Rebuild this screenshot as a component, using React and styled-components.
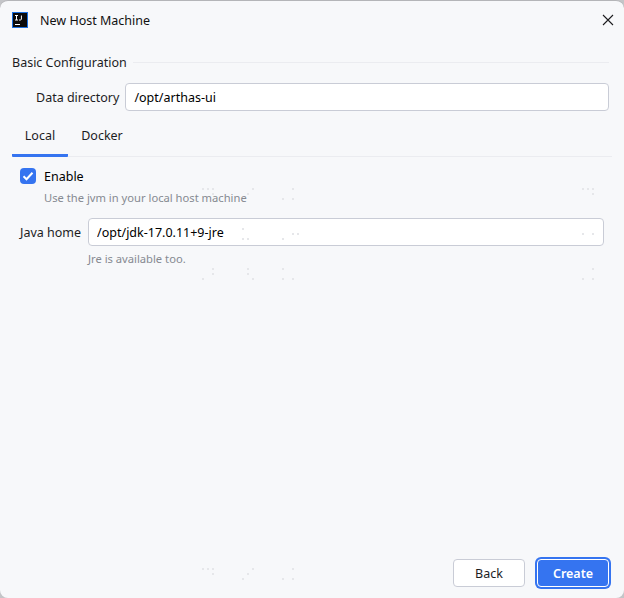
import styled, { createGlobalStyle } from "styled-components";

const GlobalStyle = createGlobalStyle`
  html, body {
    margin: 0;
    padding: 0;
    background: #c4c5c8;
  }
  * {
    box-sizing: border-box;
  }
`;

const Dialog = styled.div`
  position: relative;
  width: 624px;
  height: 598px;
  display: flex;
  flex-direction: column;
  background: #f7f8fa;
  border-top: 1px solid #b4b5b8;
  border-radius: 8px;
  font-family: "Noto Sans", "Open Sans", sans-serif;
  font-size: 12.5px;
  color: #000;
  overflow: hidden;
`;

const TitleBar = styled.div`
  height: 38px;
  display: flex;
  align-items: center;
  justify-content: space-between;
  padding: 0 10px 0 12px;
  flex: none;
`;

const TitleGroup = styled.div`
  display: flex;
  align-items: center;
  gap: 12px;
`;

const Logo = styled.svg`
  width: 16px;
  height: 16px;
  display: block;
`;

const Title = styled.span`
  color: #111;
`;

const CloseIcon = styled.svg`
  width: 12px;
  height: 12px;
  display: block;
`;

const Body = styled.div`
  flex: 1;
  display: flex;
  flex-direction: column;
  padding: 13px 12px 0;
`;

const SectionHeader = styled.div`
  display: flex;
  align-items: center;
  gap: 6px;
  height: 20px;
  margin-right: 3px;
`;

const SectionTitle = styled.span`
  color: #1d1d1f;
  white-space: nowrap;
`;

const Rule = styled.div`
  flex: 1;
  height: 1px;
  background: #ebecf0;
`;

const DirRow = styled.div`
  display: flex;
  align-items: center;
  gap: 6px;
  margin: 11px 3px 0 24px;
`;

const FieldLabel = styled.label`
  color: #1d1d1f;
  white-space: nowrap;
`;

const Input = styled.input`
  flex: 1;
  min-width: 0;
  height: 28px;
  padding: 0 8px;
  border: 1px solid #c9ccd6;
  border-radius: 4px;
  background: #fff;
  font: inherit;
  color: #000;
  outline: none;
`;

const Tabs = styled.div`
  display: flex;
  height: 42px;
  margin-top: 4px;
  border-bottom: 1px solid #ebecf0;
`;

const Tab = styled.div`
  width: ${(p) => p.$width}px;
  display: flex;
  align-items: center;
  justify-content: center;
  padding-top: 2px;
  color: #1d1d1f;
  margin-bottom: -1px;
  border-bottom: 3px solid ${(p) => (p.$active ? "#3574f0" : "transparent")};
  border-radius: 1px;
`;

const Panel = styled.div`
  display: flex;
  flex-direction: column;
  padding: 8px 8px 0;
`;

const CheckRow = styled.div`
  display: flex;
  align-items: center;
  gap: 8px;
  height: 22px;
`;

const Checkbox = styled.span`
  width: 16px;
  height: 16px;
  display: flex;
  align-items: center;
  justify-content: center;
  border-radius: 4px;
  background: #3574f0;
`;

const Hint = styled.div`
  font-size: 11.2px;
  color: #868a91;
  margin-top: ${(p) => p.$top}px;
  margin-left: ${(p) => p.$indent}px;
  line-height: 16px;
`;

const HomeRow = styled.div`
  display: flex;
  align-items: center;
  gap: 7px;
  margin-top: 12px;
`;

const Footer = styled.div`
  display: flex;
  justify-content: flex-end;
  gap: 12px;
  padding: 0 15px 11px 0;
`;

const Button = styled.button`
  width: 72px;
  height: 28px;
  padding: 0;
  border: 1px solid ${(p) => (p.$primary ? "#fff" : "#c9ccd6")};
  border-radius: 4px;
  background: ${(p) => (p.$primary ? "#3574f0" : "#fff")};
  box-shadow: ${(p) => (p.$primary ? "0 0 0 2px #3574f0" : "none")};
  color: ${(p) => (p.$primary ? "#fff" : "#1d1d1f")};
  font: inherit;
  font-weight: ${(p) => (p.$primary ? 600 : 400)};
`;

const Watermark = styled.svg`
  position: absolute;
  left: 0;
  top: -1px;
  pointer-events: none;
`;

const dots = [
  [202, 188], [207, 188], [212, 188], [252, 188], [292, 188], [582, 188], [587, 188], [592, 188],
  [212, 193], [247, 193], [282, 198], [292, 198], [592, 193],
  [242, 228], [242, 238], [247, 238], [282, 238], [292, 233], [297, 233], [582, 233], [592, 233],
  [212, 268], [247, 268], [282, 268], [592, 268],
  [202, 278], [212, 273], [247, 273], [252, 278], [282, 278], [292, 278], [582, 278], [592, 278],
  [202, 568], [207, 568], [212, 568], [252, 568], [292, 568],
  [212, 573], [247, 573], [242, 578], [282, 578], [292, 578],
];

const App = () => {
  return (
    <Dialog>
      <GlobalStyle />
      <TitleBar>
        <TitleGroup>
          <Logo viewBox="0 0 16 16">
            <rect width="16" height="16" fill="#0a0a0a" />
            <rect x="0.5" y="0.5" width="15" height="15" fill="none" stroke="#1a6fe0" />
            <path d="M3 3.5h3M4.5 3.5v4.5M3 8h3M7 8h1.4c.6 0 1-.4 1-1V3.5" stroke="#fff" strokeWidth="1" fill="none" />
            <path d="M3 12.5h5" stroke="#fff" strokeWidth="1" />
          </Logo>
          <Title>New Host Machine</Title>
        </TitleGroup>
        <CloseIcon viewBox="0 0 12 12">
          <path d="M1 1l10 10M11 1L1 11" stroke="#1d1d1f" strokeWidth="1.1" />
        </CloseIcon>
      </TitleBar>
      <Body>
        <SectionHeader>
          <SectionTitle>Basic Configuration</SectionTitle>
          <Rule />
        </SectionHeader>
        <DirRow>
          <FieldLabel>Data directory</FieldLabel>
          <Input readOnly value="/opt/arthas-ui" />
        </DirRow>
        <Tabs>
          <Tab $active $width={56}>Local</Tab>
          <Tab $width={68}>Docker</Tab>
        </Tabs>
        <Panel>
          <CheckRow>
            <Checkbox>
              <svg width="12" height="12" viewBox="0 0 12 12">
                <path d="M1.5 6.3l3 3L10.5 2.8" stroke="#fff" strokeWidth="2" fill="none" />
              </svg>
            </Checkbox>
            Enable
          </CheckRow>
          <Hint $top={3} $indent={24}>Use the jvm in your local host machine</Hint>
          <HomeRow>
            <FieldLabel>Java home</FieldLabel>
            <Input readOnly value="/opt/jdk-17.0.11+9-jre" />
          </HomeRow>
          <Hint $top={5} $indent={68}>Jre is available too.</Hint>
        </Panel>
      </Body>
      <Footer>
        <Button>Back</Button>
        <Button $primary>Create</Button>
      </Footer>
      <Watermark width="624" height="598">
        {dots.map(([x, y]) => (
          <rect key={`${x}-${y}`} x={x} y={y} width="2" height="2" fill="#e6e7ea" />
        ))}
      </Watermark>
    </Dialog>
  );
};

export default App;
